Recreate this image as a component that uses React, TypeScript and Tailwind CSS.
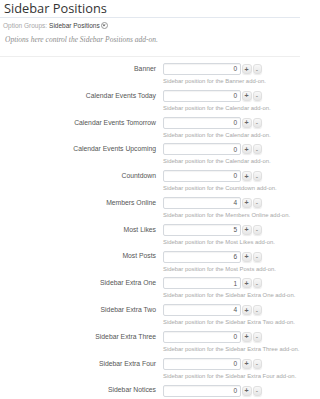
const OPTIONS: { label: string; value: number; addon: string | null }[] = [
  { label: 'Banner', value: 0, addon: 'Banner' },
  { label: 'Calendar Events Today', value: 0, addon: 'Calendar' },
  { label: 'Calendar Events Tomorrow', value: 0, addon: 'Calendar' },
  { label: 'Calendar Events Upcoming', value: 0, addon: 'Calendar' },
  { label: 'Countdown', value: 0, addon: 'Countdown' },
  { label: 'Members Online', value: 4, addon: 'Members Online' },
  { label: 'Most Likes', value: 5, addon: 'Most Likes' },
  { label: 'Most Posts', value: 6, addon: 'Most Posts' },
  { label: 'Sidebar Extra One', value: 1, addon: 'Sidebar Extra One' },
  { label: 'Sidebar Extra Two', value: 4, addon: 'Sidebar Extra Two' },
  { label: 'Sidebar Extra Three', value: 0, addon: 'Sidebar Extra Three' },
  { label: 'Sidebar Extra Four', value: 0, addon: 'Sidebar Extra Four' },
  { label: 'Sidebar Notices', value: 0, addon: null },
]

function SpinBox({ value }: { value: number }) {
  return (
    <div className="flex items-center h-[12px]">
      <div className="w-[78px] h-[12px] border border-[#d5d9de] rounded-[2px] bg-white flex items-center justify-end pr-[3px] text-[6.5px] text-[#555] shadow-[inset_0_1px_1px_rgba(0,0,0,0.05)]">
        {value}
      </div>
      <button className="ml-[0.5px] w-[10px] h-[10px] rounded-[3px] bg-gradient-to-b from-[#f8f8f8] to-[#e6e6e6] border border-[#e0e0e0] shadow-[0_1px_1px_rgba(0,0,0,0.08)] flex items-center justify-center text-[7px] leading-none text-[#666] font-bold">
        +
      </button>
      <button className="ml-[1px] w-[9px] h-[10px] rounded-[3px] bg-gradient-to-b from-[#f8f8f8] to-[#e6e6e6] border border-[#e0e0e0] shadow-[0_1px_1px_rgba(0,0,0,0.08)] flex items-center justify-center text-[7px] leading-none text-[#777]">
        -
      </button>
    </div>
  )
}

export default function App() {
  return (
    <div className="w-[300px] h-[399px] overflow-hidden bg-white font-['Liberation_Sans',Arial,sans-serif]">
      {/* Title */}
      <h1 className="h-[18px] px-[4px] border-b border-[#e3e8ef] font-['Open_Sans',sans-serif] text-[12.8px] leading-[16px] text-[#333]">
        Sidebar Positions
      </h1>

      {/* Option group + description */}
      <div className="h-[35px] border-b border-[#eeeeee] px-[3px]">
        <div className="flex items-center mt-[4px] h-[7px] text-[6.5px] leading-[7px]">
          <span className="text-[#a8a8a8]">Option Groups:</span>
          <span className="ml-[2px] text-[#444]">Sidebar Positions</span>
          <span className="ml-[1.5px] w-[6.5px] h-[6.5px] rounded-full border border-[#999] flex items-center justify-center">
            <svg width="4" height="3" viewBox="0 0 4 3">
              <path d="M0.3 0.4 L2 2.4 L3.7 0.4 Z" fill="#666" />
            </svg>
          </span>
        </div>
        <p className="mt-[6px] px-[2px] font-['Liberation_Serif',serif] italic text-[7.5px] leading-[9px] text-[#8e8e8e]">
          Options here control the Sidebar Positions add-on.
        </p>
      </div>

      {/* Options */}
      <div className="pt-[6px]">
        {OPTIONS.map((opt) => (
          <div key={opt.label} className="flex h-[26.8px]">
            <div className="w-[156px] shrink-0 h-[12px] flex items-center justify-end text-[6.8px] text-[#555] whitespace-nowrap">
              {opt.label}
            </div>
            <div className="ml-[7px] shrink-0">
              <SpinBox value={opt.value} />
              {opt.addon && (
                <p className="mt-[3px] text-[5.9px] leading-[7px] text-[#a8a8a8] whitespace-nowrap">
                  Sidebar position for the {opt.addon} add-on.
                </p>
              )}
            </div>
          </div>
        ))}
      </div>
    </div>
  )
}
